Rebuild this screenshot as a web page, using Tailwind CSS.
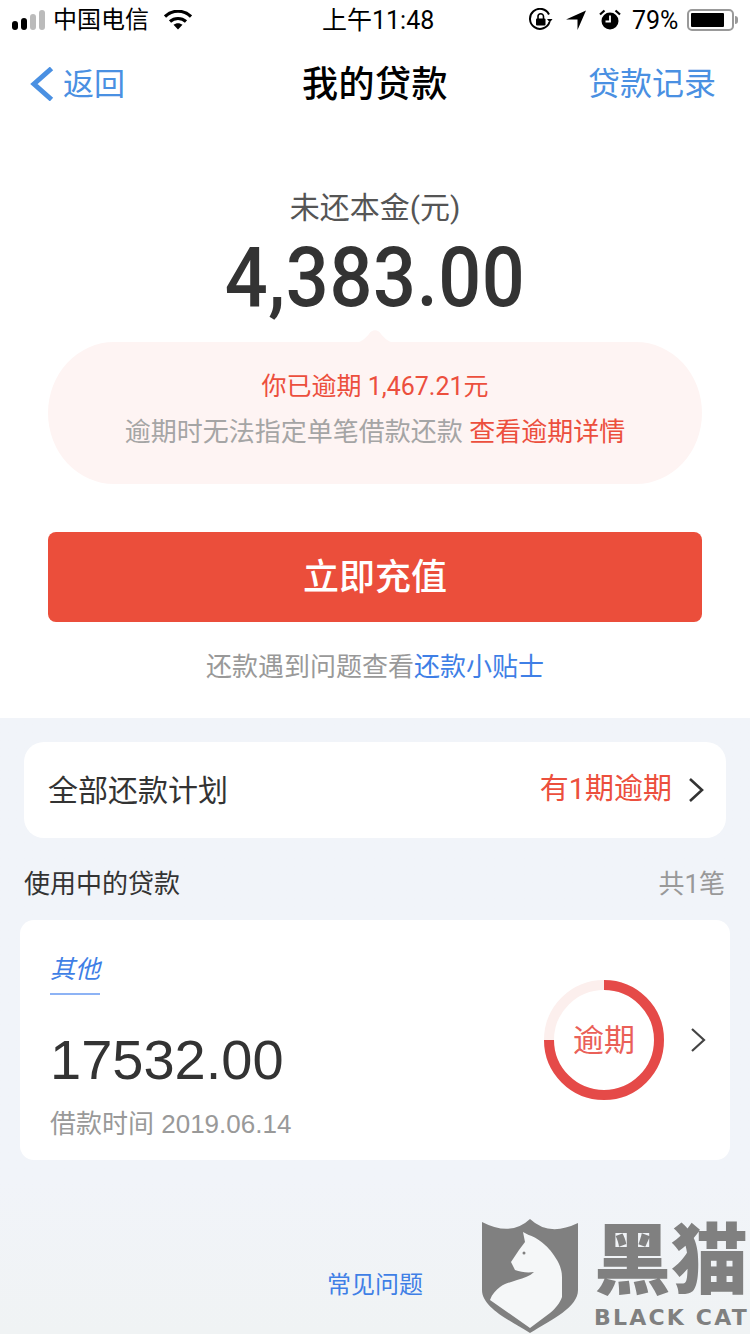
<!DOCTYPE html>
<html lang="zh-CN">
<head>
    <meta charset="UTF-8">
    <meta name="viewport" content="width=device-width, initial-scale=1.0">
    <title>我的贷款</title>
    <script src="https://cdn.jsdelivr.net/npm/@tailwindcss/browser@4"></script>
</head>
<body class="bg-white">
<div class="relative w-[750px] h-[1334px] overflow-hidden flex flex-col bg-white text-[#333] font-['Roboto','Noto_Sans_CJK_SC',sans-serif]">

    <!-- 状态栏 -->
    <div class="h-[40px] shrink-0 relative flex items-center justify-between text-black text-[25px] leading-none">
        <div class="flex items-center pl-[12px]">
            <div class="flex items-end gap-[3px] h-[20px]">
                <span class="w-[6px] h-[9px] rounded-full bg-black"></span>
                <span class="w-[6px] h-[12px] rounded-full bg-black"></span>
                <span class="w-[6px] h-[16px] rounded-full bg-[#bbb]"></span>
                <span class="w-[6px] h-[20px] rounded-full bg-[#bbb]"></span>
            </div>
            <span class="ml-[8px] w-[96px] text-[24px] whitespace-nowrap">中国电信</span>
            <svg class="ml-[15px]" width="28" height="20" viewBox="0 0 28 20">
                <path d="M1 6.500C8.500 -0.500 19.500 -0.500 27 6.500" fill="none" stroke="#000" stroke-width="3.200"/>
                <path d="M6 11.500C10.500 7.500 17.500 7.500 22 11.500" fill="none" stroke="#000" stroke-width="3.200"/>
                <path d="M9.500 14.800C12 12.600 16 12.600 18.500 14.800L14 19.500Z" fill="#000"/>
            </svg>
        </div>
        <div class="absolute left-[322px] top-[8px]">上午11:48</div>
        <div class="flex items-center pr-[12px]">
            <svg width="24" height="24" viewBox="0 0 24 24">
                <path d="M20.500 14A10 10 0 1 1 20 6.500" fill="none" stroke="#000" stroke-width="2"/>
                <path d="M18 11h5.500l-2.700 3.500Z" fill="#000"/>
                <rect x="7" y="10.500" width="9.500" height="7" rx="1" fill="#000"/>
                <path d="M9 11V8.500a2.700 2.700 0 0 1 5.500 0V11" fill="none" stroke="#000" stroke-width="1.600"/>
            </svg>
            <svg class="ml-[12px]" width="22" height="22" viewBox="0 0 22 22">
                <path d="M21 1.500L12.500 21V10.500H1Z" fill="#000"/>
            </svg>
            <svg class="ml-[12px]" width="22" height="22" viewBox="0 0 22 22">
                <circle cx="11" cy="12" r="8.500" fill="#000"/>
                <path d="M11 6.500V12.500H6.500" fill="none" stroke="#fff" stroke-width="1.800"/>
                <path d="M1 5.500L5.500 1.500M21 5.500L16.500 1.500" stroke="#000" stroke-width="2.200"/>
            </svg>
            <span class="ml-[11px] w-[48px]">79%</span>
            <div class="ml-[7px] w-[47px] h-[22px] rounded-[5px] border-2 border-[#999] p-[2px]">
                <div class="w-[33px] h-full bg-black rounded-[1px]"></div>
            </div>
            <span class="ml-[1px] w-[3px] h-[8px] bg-[#999] rounded-r-full"></span>
        </div>
    </div>

    <!-- 导航 -->
    <div class="h-[88px] shrink-0 relative flex items-center justify-between text-[32px] text-[#4a90e2] pl-[30px] pr-[34px]">
        <div class="flex items-center">
            <svg width="24" height="34" viewBox="0 0 24 34">
                <path d="M21.500 1.500L4 17L21.500 32.500" fill="none" stroke="#4a90e2" stroke-width="5"/>
            </svg>
            <span class="ml-[9px] text-[31px] pt-[2px]">返回</span>
        </div>
        <div class="absolute inset-x-0 text-center text-black font-medium text-[36px] leading-none mt-[2px] tracking-[0.5px]">我的贷款</div>
        <span>贷款记录</span>
    </div>

    <!-- 概览 -->
    <div class="h-[590px] shrink-0 flex flex-col items-center">
        <div class="mt-[65px] text-[30px] leading-[30px] text-[#555]">未还本金(元)</div>
        <div class="mt-[12px] h-[86px] leading-[86px] text-[84px] font-medium scale-x-[0.9] tracking-[0.7px] text-[#333]">4,383.00</div>

        <div class="relative mt-[21px] w-[654px] h-[142px] rounded-[66px/71px] bg-[#fef4f3] flex flex-col items-center">
            <svg class="absolute -top-[13px] left-[305px]" width="44" height="14" viewBox="0 0 44 14">
                <path d="M0 14C8 14 13 9 16 5C19 0 25 0 28 5C31 9 36 14 44 14Z" fill="#fef4f3"/>
            </svg>
            <div class="mt-[30px] text-[25px] leading-[30px] text-[#ec4f3d]">你已逾期 1,467.21元</div>
            <div class="mt-[15px] text-[26px] leading-[30px] text-[#a5a5a5]">逾期时无法指定单笔借款还款 <span class="text-[#ec4f3d]">查看逾期详情</span></div>
        </div>

        <button class="mt-[48px] w-[654px] h-[90px] pt-[2px] rounded-[8px] bg-[#eb4e3b] text-white text-[36px] font-medium">立即充值</button>
        <div class="mt-[30px] text-[26px] leading-[30px] text-[#999]">还款遇到问题查看<span class="text-[#3f7fe6]">还款小贴士</span></div>
    </div>

    <!-- 还款计划与贷款 -->
    <div class="flex-1 bg-gradient-to-b from-[#f1f4f9] from-75% to-[#f0f3f4] flex flex-col">
        <div class="mx-[24px] mt-[24px] h-[96px] rounded-[20px] bg-white flex items-center justify-between pl-[24px] pr-[22px]">
            <span class="text-[30px] text-[#333]">全部还款计划</span>
            <div class="flex items-center">
                <span class="text-[29px] text-[#ec4f3d]">有1期逾期</span>
                <svg class="ml-[16px]" width="16" height="26" viewBox="0 0 16 26">
                    <path d="M2 2L14 13L2 24" fill="none" stroke="#333" stroke-width="2.600"/>
                </svg>
            </div>
        </div>

        <div class="ml-[24px] mr-[25px] mt-[28px] h-[36px] flex items-center justify-between">
            <span class="text-[26px] text-[#333]">使用中的贷款</span>
            <span class="text-[26px] text-[#999]">共1笔</span>
        </div>

        <div class="mx-[20px] mt-[18px] h-[240px] rounded-[14px] bg-white flex items-center justify-between pl-[30px] pr-[24px]">
            <div class="flex flex-col items-start pt-[14px]">
                <span class="text-[25px] leading-[30px] italic text-[#3f7fe6] pb-[8px] border-b-2 border-[#8db3f5]">其他</span>
                <span class="mt-[33px] text-[56px] leading-[64px] text-[#333] font-['Liberation_Sans',sans-serif]">17532.00</span>
                <span class="mt-[17px] text-[26px] leading-[30px] text-[#999] font-['Liberation_Sans','Noto_Sans_CJK_SC',sans-serif]">借款时间 2019.06.14</span>
            </div>
            <div class="flex items-center">
                <div class="relative w-[120px] h-[120px] flex items-center justify-center">
                    <svg class="absolute inset-0" width="120" height="120" viewBox="0 0 120 120">
                        <circle cx="60" cy="60" r="55" fill="none" stroke="#fcefed" stroke-width="10"/>
                        <path d="M60 5A55 55 0 1 1 5 60" fill="none" stroke="#e54a48" stroke-width="10"/>
                    </svg>
                    <span class="relative pt-[3px] text-[31px] text-[#ea6058]">逾期</span>
                </div>
                <svg class="ml-[26px]" width="16" height="26" viewBox="0 0 16 26">
                    <path d="M2 2L14 13L2 24" fill="none" stroke="#444" stroke-width="2.200"/>
                </svg>
            </div>
        </div>

        <div class="mt-[110px] text-center text-[24px] leading-[30px] text-[#3f7fe6]">常见问题</div>
    </div>

    <!-- 水印 -->
    <div class="absolute left-[481px] top-[1219px] flex text-[#808080]">
        <svg width="98" height="115" viewBox="0 0 98 115">
            <path d="M1 3Q30 18 49 0Q68 18 97 4V71C97 88 72 100 49 114C26 100 1 88 1 71Z" fill="#808080"/>
            <path d="M42 13L47.700 16C60 20 69 31 69 31C76 40 81 48 81 58V78C79 84 74 90 69 94L49 109L9 81C11 75 15 71 19 68C25 64 31 63 36 61C43 59 49 57 53 53C46 54 40 53 34 51L30 43L38 31L44 23Z" fill="#f5f7f8"/>
            <circle cx="43" cy="34" r="1.500" fill="#808080"/>
        </svg>
        <div class="ml-[15px] flex flex-col items-start">
            <span class="text-[77px] leading-[76px] font-black mt-[5px] whitespace-nowrap">黑猫</span>
            <span class="mt-[4px] text-[22px] leading-[28px] font-bold tracking-[2.200px] whitespace-nowrap font-['DejaVu_Sans',sans-serif]">BLACK CAT</span>
        </div>
    </div>
</div>
</body>
</html>
